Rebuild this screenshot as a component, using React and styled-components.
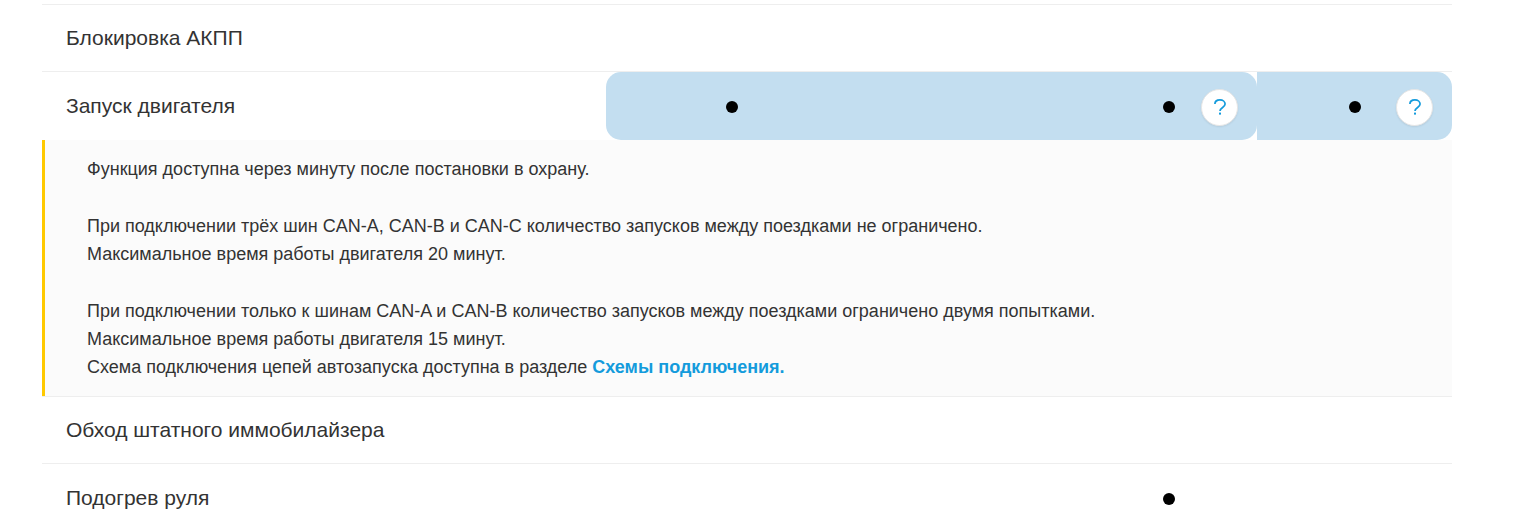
import { useState } from 'react';
import styled, { createGlobalStyle } from 'styled-components';

const GlobalStyle = createGlobalStyle`
body {
    margin: 0;
    background: #ffffff;
    color: #333333;
    font-family: "Liberation Sans", Arial, sans-serif;
}
`;

const Page = styled.main`
padding: 4px 61px 0 42px;
`;

const Table = styled.table`
width: 100%;
table-layout: fixed;
border-collapse: separate;
border-spacing: 0;
`;

const Column = styled.col`
width: ${props => props.$width};
`;

const FeatureName = styled.th`
height: ${props => props.$tall ? '68px' : '66px'};
padding: 0 24px;
border-top: 1px solid #eeeeee;
font-size: 21px;
line-height: 28px;
font-weight: 400;
text-align: left;
`;

const FeatureCell = styled.td`
padding: 0;
border-top: 1px solid #eeeeee;
`;

const Highlight = styled.div`
display: flex;
align-items: center;
height: 68px;
background: #c3def0;
border-radius: ${props => props.$radius || '0'};
`;

const Marks = styled.div`
flex: 1;
display: grid;
grid-template-columns: 1fr 12px 1fr;
align-items: center;
padding-top: 2px;
`;

const Dot = styled.span`
grid-column: 2;
width: 12px;
height: 12px;
border-radius: 50%;
background: #000000;
`;

const HelpButton = styled.button`
grid-column: 3;
justify-self: end;
display: flex;
align-items: center;
justify-content: center;
width: 37px;
height: 37px;
margin-right: 19px;
padding: 0 0 1px;
border: 1px solid #e6e6e6;
border-radius: 50%;
background: #ffffff;
box-shadow: 0 1px 2px rgba(0, 0, 0, 0.08);
color: #149bdc;
cursor: pointer;
`;

const DetailCell = styled.td`
padding: 15px 42px;
border-left: 3px solid #ffc900;
background: #fbfbfb;
`;

const DetailText = styled.div`
display: flex;
flex-direction: column;
gap: 29px;
font-size: 18px;
line-height: 28px;
`;

const Paragraph = styled.p`
margin: 0;
`;

const SchemeLink = styled.a`
color: #149bdc;
font-weight: 700;
text-decoration: none;
&:hover {
    text-decoration: underline;
}
`;

function QuestionIcon() {
    return (
        <svg width="12" height="16" viewBox="0 0 12 16" fill="none" aria-hidden="true">
            <path
                d="M0.9 5C0.9 2.5 3 0.9 5.9 0.9C8.9 0.9 11.1 2.6 11.1 5.1C11.1 8.4 6 8.5 6 12"
                stroke="currentColor"
                strokeWidth="1.7"
            />
            <rect x="5" y="13.6" width="2" height="2" fill="currentColor" />
        </svg>
    );
}

function Help({ open, onToggle }) {
    return (
        <HelpButton type="button" aria-label="Подробнее" aria-expanded={open} onClick={onToggle}>
            <QuestionIcon />
        </HelpButton>
    );
}

function EmptyCells({ count }) {
    return Array.from({ length: count }, (_, index) => <FeatureCell key={index} />);
}

function EngineStart() {
    const [open, setOpen] = useState(true);
    const toggle = () => setOpen(!open);

    return (
        <>
            <tr>
                <FeatureName scope="row" $tall>Запуск двигателя</FeatureName>
                <FeatureCell>
                    <Highlight $radius="15px 0 0 15px"><Marks><Dot /></Marks></Highlight>
                </FeatureCell>
                <FeatureCell>
                    <Highlight />
                </FeatureCell>
                <FeatureCell>
                    <Highlight $radius="0 15px 15px 0">
                        <Marks><Dot /><Help open={open} onToggle={toggle} /></Marks>
                    </Highlight>
                </FeatureCell>
                <FeatureCell>
                    <Highlight $radius="0 15px 15px 0">
                        <Marks><Dot /><Help open={open} onToggle={toggle} /></Marks>
                    </Highlight>
                </FeatureCell>
            </tr>
            {open && (
                <tr>
                    <DetailCell colSpan={5}>
                        <DetailText>
                            <Paragraph>Функция доступна через минуту после постановки в охрану.</Paragraph>
                            <Paragraph>
                                При подключении трёх шин CAN-A, CAN-B и CAN-C количество запусков между поездками не ограничено.
                                <br />
                                Максимальное время работы двигателя 20 минут.
                            </Paragraph>
                            <Paragraph>
                                При подключении только к шинам CAN-A и CAN-B количество запусков между поездками ограничено двумя попытками.
                                <br />
                                Максимальное время работы двигателя 15 минут.
                                <br />
                                Схема подключения цепей автозапуска доступна в разделе{' '}
                                <SchemeLink href="#schemes">Схемы подключения.</SchemeLink>
                            </Paragraph>
                        </DetailText>
                    </DetailCell>
                </tr>
            )}
        </>
    );
}

function App() {
    return (
        <Page>
            <GlobalStyle />
            <Table>
                <colgroup>
                    <Column $width="40%" />
                    <Column $width="17.9%" />
                    <Column $width="15.8%" />
                    <Column $width="12.5%" />
                    <Column $width="13.8%" />
                </colgroup>
                <tbody>
                    <tr>
                        <FeatureName scope="row">Блокировка АКПП</FeatureName>
                        <EmptyCells count={4} />
                    </tr>
                    <EngineStart />
                    <tr>
                        <FeatureName scope="row">Обход штатного иммобилайзера</FeatureName>
                        <EmptyCells count={4} />
                    </tr>
                    <tr>
                        <FeatureName scope="row" $tall>Подогрев руля</FeatureName>
                        <EmptyCells count={2} />
                        <FeatureCell><Marks><Dot /></Marks></FeatureCell>
                        <FeatureCell />
                    </tr>
                </tbody>
            </Table>
        </Page>
    );
}

export default App;
